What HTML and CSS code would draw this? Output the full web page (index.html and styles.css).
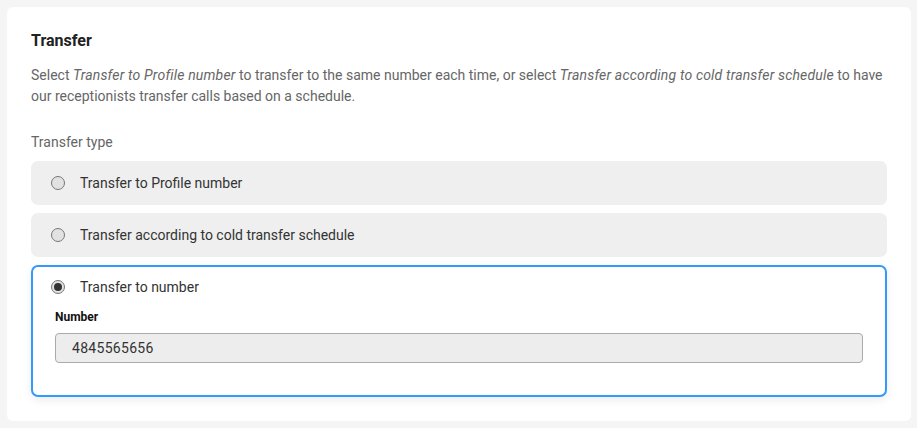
FILE: index.html
```html
<!DOCTYPE html>
<html>
<head>
<meta charset="utf-8">
<link rel="stylesheet" href="styles.css">
</head>
<body>
<div class="card">
  <h2 class="title">Transfer</h2>
  <p class="desc">Select <em>Transfer to Profile number</em> to transfer to the same number each time, or select <em>Transfer according to cold transfer schedule</em> to have our receptionists transfer calls based on a schedule.</p>
  <div class="group-label">Transfer type</div>
  <div class="options">
    <div class="option">
      <div class="opt-row"><span class="radio"></span><span class="opt-text">Transfer to Profile number</span></div>
    </div>
    <div class="option">
      <div class="opt-row"><span class="radio"></span><span class="opt-text">Transfer according to cold transfer schedule</span></div>
    </div>
    <div class="option selected">
      <div class="opt-row"><span class="radio checked"></span><span class="opt-text">Transfer to number</span></div>
      <div class="field">
        <label class="field-label">Number</label>
        <div class="input">4845565656</div>
      </div>
    </div>
  </div>
</div>
</body>
</html>
```
FILE: styles.css
```css
html, body { margin: 0; }
body {
  background: #f5f5f5;
  padding: 7px 6px 7px 7px;
  font-family: Roboto, "Noto Sans", sans-serif;
  width: 917px;
  height: 428px;
  box-sizing: border-box;
}
.card {
  background: #fff;
  border-radius: 6px;
  padding: 24px 24px 24px 24px;
  height: 414px;
  box-sizing: border-box;
}
.title {
  margin: 0;
  font-size: 16px;
  font-weight: 700;
  color: #222;
  line-height: 19px;
}
.desc {
  margin: 15px 0 0;
  font-size: 14px;
  line-height: 21px;
  color: #666;
}
.desc em { font-style: italic; letter-spacing: 0.17px; }
.group-label {
  margin-top: 25px;
  font-size: 14px;
  line-height: 20px;
  color: #666;
}
.options {
  margin-top: 9px;
  display: flex;
  flex-direction: column;
  gap: 8px;
}
.option {
  background: #efefef;
  border-radius: 7px;
  border: 2px solid transparent;
}
.option.selected {
  background: #fff;
  border-color: #3399ff;
  box-shadow: 0 3px 8px rgba(0,0,0,0.08);
  padding-bottom: 32px;
}
.opt-row {
  height: 40px;
  display: flex;
  align-items: center;
  padding-left: 18px;
}
.radio {
  width: 12px;
  height: 12px;
  border: 1px solid #777;
  border-radius: 50%;
  background: #e2e2e2;
  display: flex;
  align-items: center;
  justify-content: center;
}
.radio.checked::after {
  content: "";
  width: 8px;
  height: 8px;
  border-radius: 50%;
  background: #333;
}
.opt-text {
  margin-left: 15px;
  font-size: 14px;
  color: #333;
}
.field {
  padding: 0 22px;
  margin-top: 2px;
}
.field-label {
  display: block;
  font-size: 12px;
  font-weight: 700;
  color: #111;
  line-height: 16px;
}
.input {
  margin-top: 8px;
  height: 28px;
  border: 1px solid #aaa;
  border-radius: 4px;
  background: #ededed;
  font-size: 14px;
  color: #333;
  display: flex;
  align-items: center;
  padding-left: 16px;
  letter-spacing: 0.3px;
}
```
